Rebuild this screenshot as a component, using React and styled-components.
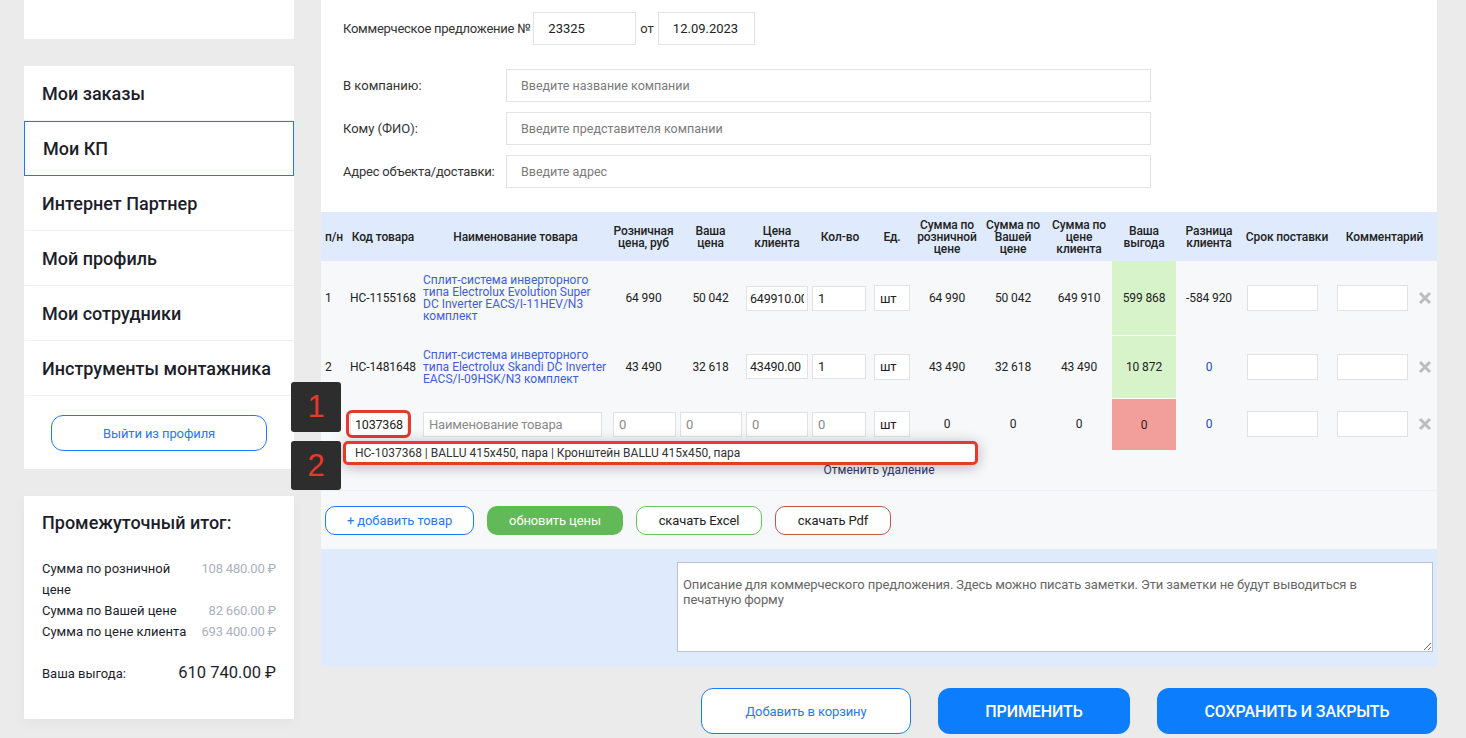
import React from 'react';
import styled, { createGlobalStyle } from 'styled-components';

const GlobalStyle = createGlobalStyle`
  html, body { margin: 0; padding: 0; background: #ebebeb; }
  body { font-family: Roboto, "Liberation Sans", Arial, sans-serif; color: #222; }
  * { box-sizing: border-box; }
  input, textarea, button { font-family: inherit; }
`;

const Page = styled.div`
  display: flex;
  align-items: flex-start;
  gap: 27px;
  padding: 0 29px 0 24px;
  width: 1466px;
  height: 738px;
  overflow: hidden;
`;

/* ---------- Sidebar ---------- */
const Sidebar = styled.aside`
  width: 270px;
  flex: none;
  display: flex;
  flex-direction: column;
  gap: 27px;
`;

const TopCard = styled.div`
  height: 39px;
  background: #fff;
`;

const Menu = styled.nav`
  background: #fff;
  display: flex;
  flex-direction: column;
`;

const MenuItem = styled.a`
  display: flex;
  align-items: center;
  height: 55px;
  padding-left: ${p => (p.$active ? '18px' : '17px')};
  font-size: 18px;
  font-weight: 500;
  color: #1d1e2c;
  text-decoration: none;
  border: 1px solid transparent;
  border-bottom-color: #f0f0f0;
  ${p => p.$active && 'border-color: #1a7cf5;'}
`;

const LogoutWrap = styled.div`
  padding: 19px 27px 18px;
`;

const OutlineBtn = styled.button`
  width: ${p => p.$w || 'auto'};
  height: ${p => p.$h || '29px'};
  padding: 0;
  background: #fff;
  border: 1px solid ${p => p.$border || '#1a7cf5'};
  border-radius: ${p => p.$r || '10px'};
  color: ${p => p.$color || '#2a78ea'};
  font-size: 13px;
  letter-spacing: -0.1px;
  cursor: pointer;
`;

const SummaryCard = styled.div`
  background: #fff;
  height: 223px;
  padding: 16px 18px 0;
  box-shadow: 0 4px 12px rgba(0, 0, 0, 0.04);
`;

const SummaryTitle = styled.div`
  font-size: 18px;
  font-weight: 500;
  line-height: 22px;
  color: #1d1e2c;
  margin-bottom: 24px;
`;

const SummaryGrid = styled.div`
  display: grid;
  grid-template-columns: 146px 1fr;
  font-size: 13px;
  line-height: 21px;
`;

const SumLabel = styled.div`
  color: #1d1e2c;
`;

const SumValue = styled.div`
  text-align: right;
  color: #a9b2be;
  letter-spacing: -0.2px;
`;

const ProfitRow = styled.div`
  display: flex;
  justify-content: space-between;
  align-items: center;
  margin-top: 20px;
  font-size: 13px;
  color: #1d1e2c;
`;

const ProfitValue = styled.div`
  font-size: 16.5px;
  line-height: 22px;
  color: #1d1e2c;
`;

/* ---------- Main ---------- */
const Main = styled.main`
  width: 1116px;
  flex: none;
  display: flex;
  flex-direction: column;
`;

const HeaderForm = styled.section`
  background: #fff;
  padding: 12px 22px 24px;
`;

const OfferRow = styled.div`
  display: flex;
  align-items: center;
  font-size: 13px;
  color: #333;
`;

const Label = styled.span`
  font-size: 13px;
  letter-spacing: ${p => p.$ls || '0'};
  color: #333;
`;

const TextInput = styled.input`
  width: ${p => p.$w};
  height: 33px;
  border: 1px solid #e3e3e3;
  background: #fff;
  padding: 0 ${p => p.$pad || '14px'};
  font-size: ${p => p.$fs || '13px'};
  color: #222;
  outline: none;
  margin: ${p => p.$m || '0'};
  &::placeholder { color: #7b7b7b; }
`;

const FieldGrid = styled.div`
  display: grid;
  grid-template-columns: 163px 645px;
  row-gap: 10px;
  align-items: center;
  margin-top: 24px;
`;

/* ---------- Table ---------- */
const COLS = '24px 76px 189px 67px 67px 66px 60px 44px 66px 66px 66px 64px 66px 90px 80px 25px';

const Table = styled.section`
  background: #f7f8fa;
`;

const HeadRow = styled.div`
  display: grid;
  grid-template-columns: ${COLS};
  height: 49px;
  background: #dfebfc;
`;

const Th = styled.div`
  grid-column: span ${p => p.$span || 1};
  display: flex;
  align-items: center;
  justify-content: ${p => (p.$left ? 'flex-start' : 'center')};
  padding-left: ${p => (p.$left ? '4px' : '0')};
  text-align: center;
  font-size: 12px;
  font-weight: 500;
  line-height: 12px;
  letter-spacing: -0.1px;
  color: #222;
`;

const Row = styled.div`
  position: relative;
  display: grid;
  grid-template-columns: ${COLS};
  height: ${p => p.$h};
`;

const Td = styled.div`
  display: flex;
  align-items: center;
  justify-content: ${p => (p.$left ? 'flex-start' : 'center')};
  padding-left: ${p => p.$pl || '0'};
  font-size: 12px;
  letter-spacing: -0.1px;
  color: ${p => p.$color || '#222'};
  background: ${p => p.$bg || 'transparent'};
  ${p => p.$sep && 'border-top: 1px solid #fff;'}
`;

const NameLink = styled.a`
  font-size: 12px;
  line-height: 12px;
  letter-spacing: 0;
  color: #3e5ee0;
  text-decoration: none;
  padding-right: 3px;
`;

const CellInput = styled.input`
  width: ${p => p.$w};
  height: ${p => p.$h || '25px'};
  border: 1px solid #e2e2e2;
  background: #fff;
  padding: 0 ${p => p.$pad || '5px'};
  font-size: ${p => p.$fs || '13px'};
  letter-spacing: -0.2px;
  color: ${p => (p.$muted ? '#8a8a8a' : '#222')};
  outline: none;
  &::placeholder { color: #8a8a8a; }
`;

const Annotated = styled.div`
  position: relative;
  &::after {
    content: '';
    position: absolute;
    inset: -2px -3px -2px -4px;
    border: 3px solid #e33b2e;
    border-radius: 6px;
    pointer-events: none;
  }
`;

const Badge = styled.div`
  position: absolute;
  left: -30px;
  top: ${p => p.$top};
  width: 50px;
  height: ${p => p.$h || '50px'};
  background: #2d2d2d;
  border-radius: 3px;
  display: flex;
  align-items: center;
  justify-content: center;
  color: #e5392b;
  font-size: 31px;
  font-family: "Liberation Sans", Arial, sans-serif;
  z-index: 3;
`;

const Suggest = styled.div`
  position: absolute;
  left: 22px;
  top: 43px;
  width: 635px;
  height: 24px;
  background: #fff;
  border: 3px solid #e33b2e;
  border-radius: 5px;
  box-shadow: 0 2px 14px rgba(0, 0, 0, 0.28);
  display: flex;
  align-items: center;
  padding-left: 9px;
  font-size: 12px;
  color: #333;
  z-index: 2;
`;

const CancelRow = styled.div`
  height: 40px;
  display: flex;
  align-items: center;
  justify-content: center;
  font-size: 12px;
  color: #2c3a68;
`;

const ActionBar = styled.div`
  display: flex;
  gap: 13px;
  padding: 15px 4px 14px;
  border-top: 1px solid #eef0f3;
`;

const FillBtn = styled.button`
  width: ${p => p.$w};
  height: ${p => p.$h || '29px'};
  border: none;
  border-radius: ${p => p.$r || '10px'};
  background: ${p => p.$bg};
  color: #fff;
  font-size: ${p => p.$fs || '13px'};
  font-weight: ${p => p.$fw || 400};
  letter-spacing: -0.1px;
  cursor: pointer;
`;

const Notes = styled.section`
  display: flex;
  justify-content: flex-end;
  padding: 13px 4px 15px;
  background: #dfebfc;
`;

const NotesArea = styled.textarea`
  width: 756px;
  height: 90px;
  border: 1px solid #b9c3cd;
  background: #fff;
  padding: 14px 60px 12px 5px;
  font-size: 13px;
  line-height: 15px;
  letter-spacing: -0.1px;
  color: #555;
  resize: both;
  outline: none;
  &::placeholder { color: #666; }
`;

const BottomBar = styled.div`
  display: flex;
  justify-content: flex-end;
  gap: 27px;
  margin-top: 21px;
`;

const CloseIcon = () => (
  <svg width="14" height="14" viewBox="0 0 14 14">
    <path d="M2 2L12 12M12 2L2 12" stroke="#bdbdbd" strokeWidth="3" strokeLinecap="butt" />
  </svg>
);

const rows = [
  {
    n: '1', code: 'НС-1155168',
    name: 'Сплит-система инверторного типа Electrolux Evolution Super DC Inverter EACS/I-11HEV/N3 комплект',
    retail: '64 990', yours: '50 042', client: '649910.00', qty: '1',
    s1: '64 990', s2: '50 042', s3: '649 910', profit: '599 868', diff: '-584 920', diffBlue: false, h: '74px'
  },
  {
    n: '2', code: 'НС-1481648',
    name: 'Сплит-система инверторного типа Electrolux Skandi DC Inverter EACS/I-09HSK/N3 комплект',
    retail: '43 490', yours: '32 618', client: '43490.00', qty: '1',
    s1: '43 490', s2: '32 618', s3: '43 490', profit: '10 872', diff: '0', diffBlue: true, h: '63px'
  }
];

export default function App() {
  return (
    <>
      <GlobalStyle />
      <Page>
        <Sidebar>
          <TopCard />
          <Menu>
            <MenuItem>Мои заказы</MenuItem>
            <MenuItem $active>Мои КП</MenuItem>
            <MenuItem>Интернет Партнер</MenuItem>
            <MenuItem>Мой профиль</MenuItem>
            <MenuItem>Мои сотрудники</MenuItem>
            <MenuItem>Инструменты монтажника</MenuItem>
            <LogoutWrap>
              <OutlineBtn $w="216px" $h="36px" $r="12px">Выйти из профиля</OutlineBtn>
            </LogoutWrap>
          </Menu>
          <SummaryCard>
            <SummaryTitle>Промежуточный итог:</SummaryTitle>
            <SummaryGrid>
              <SumLabel>Сумма по розничной цене</SumLabel>
              <SumValue>108 480.00 ₽</SumValue>
              <SumLabel>Сумма по Вашей цене</SumLabel>
              <SumValue>82 660.00 ₽</SumValue>
              <SumLabel>Сумма по цене клиента</SumLabel>
              <SumValue>693 400.00 ₽</SumValue>
            </SummaryGrid>
            <ProfitRow>
              <span>Ваша выгода:</span>
              <ProfitValue>610 740.00 ₽</ProfitValue>
            </ProfitRow>
          </SummaryCard>
        </Sidebar>

        <Main>
          <HeaderForm>
            <OfferRow>
              <Label $ls="-0.25px">Коммерческое предложение №</Label>
              <TextInput $w="103px" $m="0 4px 0 3px" defaultValue="23325" />
              <Label>от</Label>
              <TextInput $w="97px" $m="0 0 0 4px" defaultValue="12.09.2023" />
            </OfferRow>
            <FieldGrid>
              <Label>В компанию:</Label>
              <TextInput $w="645px" $fs="12.5px" placeholder="Введите название компании" />
              <Label>Кому (ФИО):</Label>
              <TextInput $w="645px" $fs="12.5px" placeholder="Введите представителя компании" />
              <Label $ls="-0.2px">Адрес объекта/доставки:</Label>
              <TextInput $w="645px" $fs="12.5px" placeholder="Введите адрес" />
            </FieldGrid>
          </HeaderForm>

          <Table>
            <HeadRow>
              <Th $left>п/н</Th>
              <Th>Код товара</Th>
              <Th>Наименование товара</Th>
              <Th>Розничная<br />цена, руб</Th>
              <Th>Ваша<br />цена</Th>
              <Th>Цена<br />клиента</Th>
              <Th>Кол-во</Th>
              <Th>Ед.</Th>
              <Th>Сумма по<br />розничной<br />цене</Th>
              <Th>Сумма по<br />Вашей<br />цене</Th>
              <Th>Сумма по<br />цене<br />клиента</Th>
              <Th>Ваша<br />выгода</Th>
              <Th>Разница<br />клиента</Th>
              <Th>Срок поставки</Th>
              <Th $span={2}>Комментарий</Th>
            </HeadRow>

            {rows.map((r, i) => (
              <Row key={r.n} $h={r.h}>
                <Td $left $pl="4px">{r.n}</Td>
                <Td>{r.code}</Td>
                <Td $left $pl="2px"><NameLink href="#">{r.name}</NameLink></Td>
                <Td>{r.retail}</Td>
                <Td>{r.yours}</Td>
                <Td><CellInput $w="62px" $pad="3px" $fs="12.5px" defaultValue={r.client} /></Td>
                <Td $left $pl="2px"><CellInput $w="54px" defaultValue={r.qty} /></Td>
                <Td><CellInput $w="36px" $h="26px" defaultValue="шт" /></Td>
                <Td>{r.s1}</Td>
                <Td>{r.s2}</Td>
                <Td>{r.s3}</Td>
                <Td $bg="#d6f3c9" $sep={i > 0}>{r.profit}</Td>
                <Td $color={r.diffBlue ? '#2147c9' : '#222'}>{r.diff}</Td>
                <Td $left $pl="5px"><CellInput $w="71px" $h="26px" /></Td>
                <Td $left $pl="5px"><CellInput $w="71px" $h="26px" /></Td>
                <Td><CloseIcon /></Td>
              </Row>
            ))}

            <Row $h="52px">
              <Badge $top="-16px">1</Badge>
              <Td />
              <Td $left $pl="5px">
                <Annotated>
                  <CellInput $w="58px" $h="24px" $pad="4px" $fs="12.5px" defaultValue="1037368" />
                </Annotated>
              </Td>
              <Td $left $pl="2px"><CellInput $w="179px" placeholder="Наименование товара" /></Td>
              <Td $left $pl="3px"><CellInput $w="63px" $muted defaultValue="0" /></Td>
              <Td $left $pl="3px"><CellInput $w="62px" $muted defaultValue="0" /></Td>
              <Td><CellInput $w="62px" $muted defaultValue="0" /></Td>
              <Td $left $pl="2px"><CellInput $w="54px" $muted defaultValue="0" /></Td>
              <Td><CellInput $w="36px" $h="26px" defaultValue="шт" /></Td>
              <Td>0</Td>
              <Td>0</Td>
              <Td>0</Td>
              <Td $bg="#f29e9b" $sep>0</Td>
              <Td $color="#2147c9">0</Td>
              <Td $left $pl="5px"><CellInput $w="71px" $h="26px" /></Td>
              <Td $left $pl="5px"><CellInput $w="71px" $h="26px" /></Td>
              <Td><CloseIcon /></Td>
              <Badge $top="43px" $h="49px">2</Badge>
              <Suggest>НС-1037368 | BALLU 415x450, пара | Кронштейн BALLU 415x450, пара</Suggest>
            </Row>

            <CancelRow>Отменить удаление</CancelRow>

            <ActionBar>
              <OutlineBtn $w="149px">+ добавить товар</OutlineBtn>
              <FillBtn $w="136px" $bg="#62b957">обновить цены</FillBtn>
              <OutlineBtn $w="126px" $border="#6cc163" $color="#222">скачать Excel</OutlineBtn>
              <OutlineBtn $w="116px" $border="#c9514c" $color="#222">скачать Pdf</OutlineBtn>
            </ActionBar>
          </Table>

          <Notes>
            <NotesArea placeholder="Описание для коммерческого предложения. Здесь можно писать заметки. Эти заметки не будут выводиться в печатную форму" />
          </Notes>

          <BottomBar>
            <OutlineBtn $w="210px" $h="46px" $r="12px">Добавить в корзину</OutlineBtn>
            <FillBtn $w="192px" $h="46px" $r="12px" $bg="#0b7dfd" $fs="16px" $fw={500}>ПРИМЕНИТЬ</FillBtn>
            <FillBtn $w="280px" $h="46px" $r="12px" $bg="#0b7dfd" $fs="16px" $fw={500}>СОХРАНИТЬ И ЗАКРЫТЬ</FillBtn>
          </BottomBar>
        </Main>
      </Page>
    </>
  );
}
